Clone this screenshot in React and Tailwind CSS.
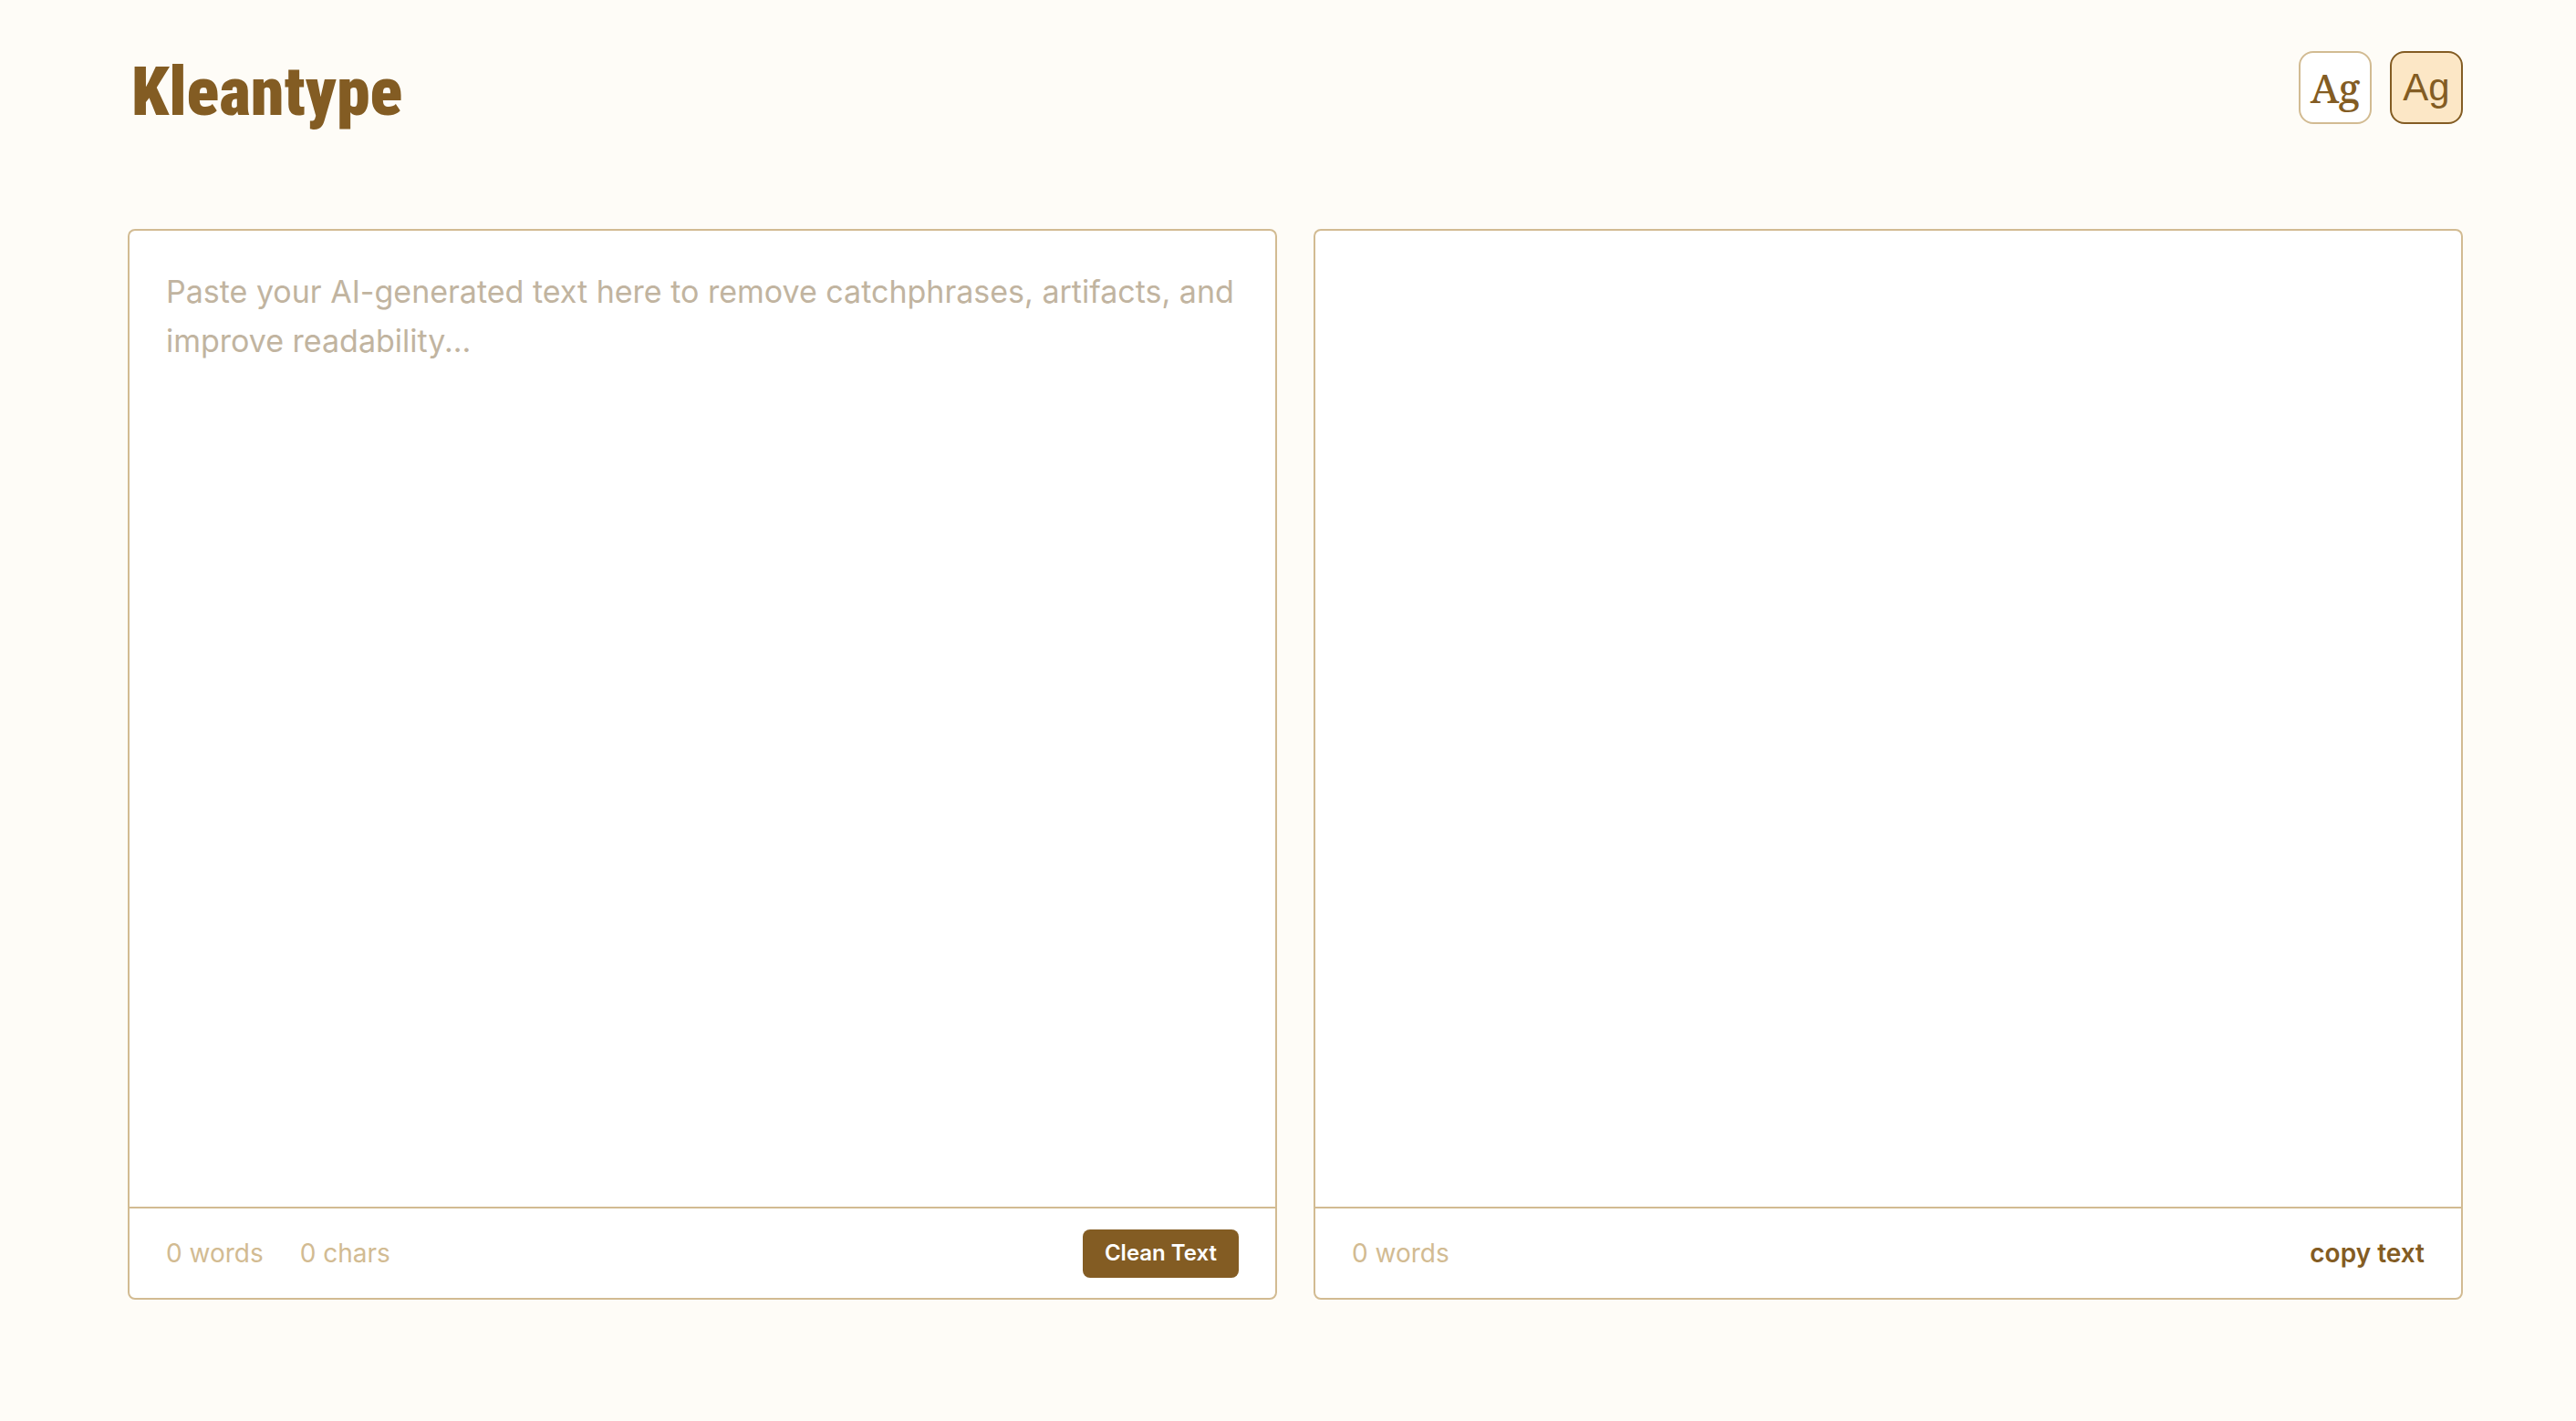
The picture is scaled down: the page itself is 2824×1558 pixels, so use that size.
export default function App() {
  return (
    <div className="min-h-screen bg-[#fefcf7] pl-[140px] pr-[124px] pt-14 pb-[133px] flex flex-col font-['Inter',sans-serif] text-[#835c23]">
      <header className="flex items-start justify-between h-[195px]">
        <h1 className="pl-1 text-[74px] leading-[90px] font-black font-['Roboto_Condensed',Roboto,sans-serif]">Kleantype</h1>
        <div className="flex gap-5">
          <button aria-label="Serif font" className="size-20 rounded-2xl border-2 border-[#d2bb92] bg-white text-[44px] leading-none font-medium font-['Noto_Serif','Liberation_Serif',serif]">Ag</button>
          <button aria-label="Sans-serif font" aria-pressed="true" className="size-20 rounded-2xl border-2 border-[#835c23] bg-[#fce7c6] text-[42px] leading-none font-['Liberation_Sans',sans-serif]">Ag</button>
        </div>
      </header>
      <main className="grid grid-cols-2 gap-10 grow">
        <section className="flex flex-col bg-white border-2 border-[#d2bb92] rounded-lg">
          <textarea aria-label="Text to clean" className="grow resize-none outline-none px-10 py-10 text-[34px] leading-[54px] placeholder:text-[#c1b4a0]" placeholder="Paste your AI-generated text here to remove catchphrases, artifacts, and improve readability..." />
          <footer className="h-[100px] border-t-2 border-[#d2bb92] px-10 flex items-center justify-between text-[28px] text-[#d2bb92]">
            <div className="flex gap-10"><span>0 words</span><span>0 chars</span></div>
            <button className="h-[53px] px-6 rounded-lg bg-[#835c23] text-white text-[24px] font-semibold">Clean Text</button>
          </footer>
        </section>
        <section className="flex flex-col bg-white border-2 border-[#d2bb92] rounded-lg">
          <div className="grow" />
          <footer className="h-[100px] border-t-2 border-[#d2bb92] px-10 flex items-center justify-between text-[28px] text-[#d2bb92]">
            <span>0 words</span>
            <button className="text-[#835c23] font-semibold">copy text</button>
          </footer>
        </section>
      </main>
    </div>
  );
}
